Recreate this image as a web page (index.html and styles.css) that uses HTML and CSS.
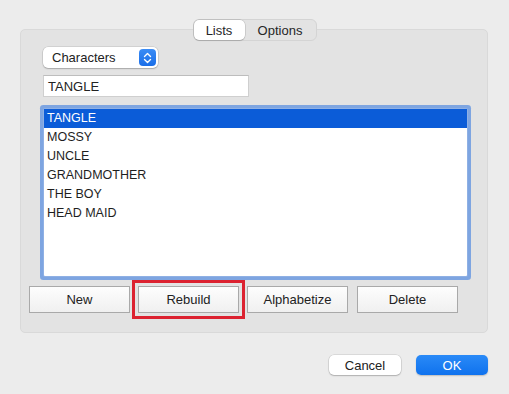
FILE: index.html
```html
<!DOCTYPE html>
<html>
<head>
    <title>Lists</title>
    <link rel="stylesheet" href="styles.css">
</head>
<body>
    <div class="dialog">
        <div class="tabs">
            <div class="tab tab-active">Lists</div>
            <div class="tab">Options</div>
        </div>

        <div class="group-box">
            <div class="popup">
                <span class="popup-label">Characters</span>
                <span class="popup-stepper">
                    <svg width="9" height="12" viewBox="0 0 9 12">
                        <path d="M1.5 4.5 L4.5 1.5 L7.5 4.5" fill="none" stroke="#ffffff" stroke-width="1.4" stroke-linecap="round" stroke-linejoin="round"/>
                        <path d="M1.5 7.5 L4.5 10.5 L7.5 7.5" fill="none" stroke="#ffffff" stroke-width="1.4" stroke-linecap="round" stroke-linejoin="round"/>
                    </svg>
                </span>
            </div>

            <div class="text-field">TANGLE</div>

            <div class="list-box">
                <div class="list-row selected">TANGLE</div>
                <div class="list-row">MOSSY</div>
                <div class="list-row">UNCLE</div>
                <div class="list-row">GRANDMOTHER</div>
                <div class="list-row">THE BOY</div>
                <div class="list-row">HEAD MAID</div>
            </div>

            <div class="list-buttons">
                <button class="push-button">New</button>
                <button class="push-button highlighted">Rebuild</button>
                <button class="push-button">Alphabetize</button>
                <button class="push-button last">Delete</button>
            </div>
        </div>

        <div class="footer">
            <button class="footer-button">Cancel</button>
            <button class="footer-button default">OK</button>
        </div>
    </div>
</body>
</html>
```

FILE: styles.css
```css
html, body {
    margin: 0;
    padding: 0;
}
body {
    font-family: "Liberation Sans", Arial, sans-serif;
    font-size: 12.5px;
    color: #222222;
    background-color: #ececec;
    width: 509px;
    height: 394px;
    overflow: hidden;
}
.dialog {
    padding-top: 19px;
}
.tabs {
    display: flex;
    width: 122px;
    height: 20px;
    margin: 0 auto;
    background-color: #e3e3e3;
    border: 1px solid #d4d4d4;
    border-radius: 6px;
    position: relative;
    z-index: 1;
    font-size: 13px;
}
.tab {
    display: flex;
    align-items: center;
    justify-content: center;
    width: 71px;
    color: #262626;
}
.tab-active {
    width: 51px;
    background-color: #ffffff;
    border-radius: 5px;
    box-shadow: 0 0 0 0.5px rgba(0, 0, 0, 0.18), 0 1px 1px rgba(0, 0, 0, 0.12);
}
.group-box {
    width: 466px;
    margin: -12px 0 0 20px;
    padding: 17px 0 19px 0;
    background-color: #e3e3e3;
    border: 1px solid #d9d9d9;
    border-radius: 5px;
}
.popup {
    display: flex;
    align-items: center;
    justify-content: space-between;
    width: 115px;
    height: 21px;
    margin-left: 22px;
    background-color: #ffffff;
    border-radius: 5px;
    box-shadow: 0 0 0 0.5px rgba(0, 0, 0, 0.15), 0 1px 1.5px rgba(0, 0, 0, 0.2);
    font-size: 13px;
}
.popup-label {
    padding-left: 9px;
}
.popup-stepper {
    display: flex;
    align-items: center;
    justify-content: center;
    width: 17px;
    height: 17px;
    margin-right: 2px;
    background: linear-gradient(#3b8cf5, #1a6ee8);
    border-radius: 4px;
}
.text-field {
    width: 200px;
    height: 20px;
    line-height: 21px;
    margin: 7px 0 0 22px;
    padding-left: 4px;
    background-color: #ffffff;
    border: 1px solid #cfcfcf;
    border-top-color: #bdbdbd;
    font-size: 13px;
}
.list-box {
    width: 423px;
    height: 167px;
    margin: 12px 0 0 23px;
    background-color: #ffffff;
    box-shadow: 0 0 0 1px #8fb0e4, 0 0 0 4px #7ea5e1;
    border-radius: 1px;
}
.list-row {
    height: 19px;
    line-height: 19px;
    padding-left: 3px;
    color: #1e1e1e;
}
.list-row.selected {
    background-color: #0b5cd8;
    color: #ffffff;
}
.list-buttons {
    display: flex;
    gap: 8px;
    margin: 10px 0 0 8px;
}
.push-button {
    width: 101px;
    height: 27px;
    padding: 0;
    font-family: "Liberation Sans", Arial, sans-serif;
    font-size: 13px;
    color: #222222;
    background: linear-gradient(#fdfdfd, #f0f0f0);
    border: 1px solid #a9a9a9;
    border-radius: 0;
}
.push-button.last {
    margin-left: 1px;
}
.push-button.highlighted {
    outline: 3px solid #dc2230;
    outline-offset: 3px;
}
.footer {
    display: flex;
    justify-content: flex-end;
    gap: 15px;
    margin: 22px 21px 0 0;
}
.footer-button {
    width: 72px;
    height: 20px;
    padding: 0;
    font-family: "Liberation Sans", Arial, sans-serif;
    font-size: 13px;
    color: #222222;
    background-color: #ffffff;
    border: none;
    border-radius: 5px;
    box-shadow: 0 0 0 0.5px rgba(0, 0, 0, 0.15), 0 1px 1.5px rgba(0, 0, 0, 0.2);
}
.footer-button.default {
    color: #ffffff;
    background: linear-gradient(#2a8af7, #0f72ee);
    box-shadow: 0 1px 1.5px rgba(0, 0, 0, 0.2);
}
```
